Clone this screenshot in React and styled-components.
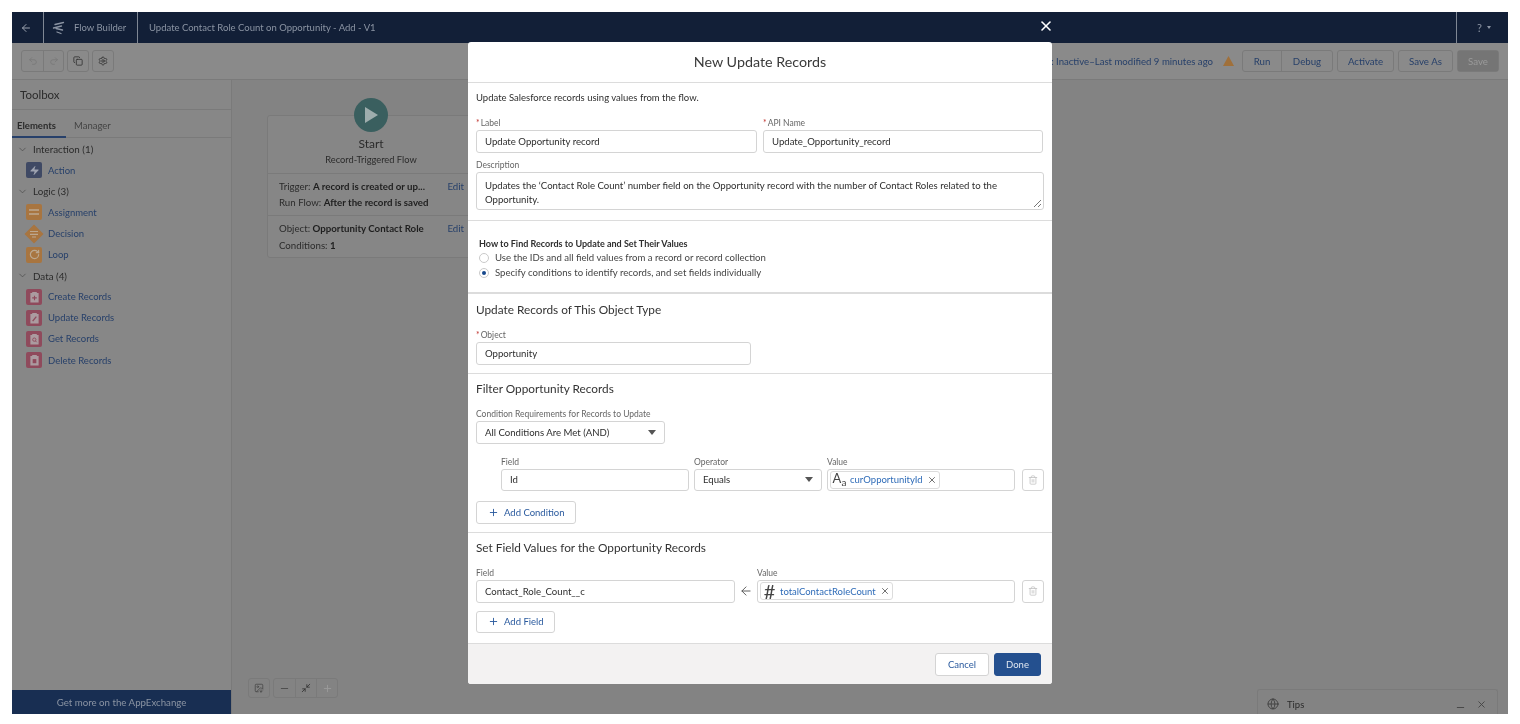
import React from 'react'
import styled, { createGlobalStyle } from 'styled-components'
import { ArrowLeft, Undo2, Redo2, Copy, Settings, ChevronDown, Plus, Minus, X, Trash2, Minimize2, Globe, Zap, RotateCw, ImageDown } from 'lucide-react'

const GlobalStyle = createGlobalStyle`
  html, body { margin: 0; padding: 0; background: #fff; }
  body { font-family: Lato, "Open Sans", sans-serif; overflow: hidden; }
  * { box-sizing: border-box; }
`

const dimText = '#2b2b2b'
const dimLink = '#27406a'
const dimLine = '#7a7a7a'
const dimOrange = '#a87540'
const dimRed = '#8f4a5c'

const Page = styled.div`
  width: 1520px;
  height: 724px;
  padding: 12px 12px 10px;
  position: relative;
`

const Shell = styled.div`
  height: 702px;
  display: flex;
  flex-direction: column;
  background: #868686;
  filter: blur(0.4px);
`

const TopBar = styled.header`
  height: 31px;
  flex: none;
  display: flex;
  align-items: stretch;
  background: #121f37;
  color: #8b94a3;
  font-size: 9.5px;
`

const TopCell = styled.div`
  display: flex;
  align-items: center;
  gap: ${p => p.$gap || '8px'};
  width: ${p => p.$w || 'auto'};
  padding: ${p => p.$pad || 0};
  border-right: ${p => p.$noLine ? 'none' : '1px solid #7f8794'};
  border-left: ${p => p.$lineLeft ? '1px solid #7f8794' : 'none'};
  flex: ${p => p.$grow ? 1 : 'none'};
`

const HelpMark = styled.span`
  font-size: 11px;
`

const MiniCaret = styled.span`
  width: 0;
  height: 0;
  border-left: 2.5px solid transparent;
  border-right: 2.5px solid transparent;
  border-top: 3px solid #8b94a3;
`

const ToolBar = styled.div`
  height: 37px;
  flex: none;
  display: flex;
  align-items: center;
  justify-content: space-between;
  padding: 0 9px;
  background: #8a8a8a;
  border-bottom: 1px solid ${dimLine};
`

const ToolGroup = styled.div`
  display: flex;
  align-items: center;
  gap: ${p => p.$gap};
`

const BtnGroup = styled.div`
  display: flex;
  height: ${p => p.$h || '22px'};
  border: 1px solid ${dimLine};
  border-radius: 3px;
`

const ToolBtn = styled.div`
  width: ${p => p.$w || '21px'};
  display: flex;
  align-items: center;
  justify-content: center;
  font-size: 9.7px;
  color: ${p => p.$faint ? '#9a9a9a' : dimLink};
  background: ${p => p.$solid ? '#757575' : 'transparent'};
  & + & { border-left: 1px solid ${dimLine}; }
`

const Status = styled.span`
  font-size: 9.6px;
  color: ${dimLink};
  white-space: nowrap;
  margin-right: 6px;
`

const WarnIcon = styled.svg`
  margin-right: 4px;
`

const Body = styled.div`
  flex: 1;
  min-height: 0;
  display: flex;
`

const Sidebar = styled.aside`
  width: 220px;
  flex: none;
  display: flex;
  flex-direction: column;
  border-right: 1px solid ${dimLine};
  background: #878787;
  color: ${dimText};
`

const SideTitle = styled.div`
  height: 30px;
  flex: none;
  padding: 8px 8px 0;
  font-size: 11.5px;
  border-bottom: 1px solid ${dimLine};
`

const Tabs = styled.div`
  height: 28px;
  flex: none;
  display: flex;
  border-bottom: 1px solid ${dimLine};
  font-size: 9.5px;
`

const Tab = styled.div`
  width: ${p => p.$w};
  padding: 10px 0 0 ${p => p.$left};
  font-weight: ${p => p.$active ? 700 : 400};
  border-bottom: ${p => p.$active ? `2px solid ${dimLink}` : 'none'};
  margin-bottom: -1px;
  color: ${p => p.$active ? dimText : '#444'};
`

const Tree = styled.div`
  flex: 1;
  padding-top: 0.6px;
`

const Group = styled.div`
  height: 21.1px;
  display: flex;
  align-items: center;
  gap: 5px;
  padding-left: 5px;
  font-size: 9.8px;
`

const Item = styled.div`
  height: 21.1px;
  display: flex;
  align-items: center;
  gap: 6px;
  padding-left: 14px;
  font-size: 9.5px;
  color: ${dimLink};
`

const ElemIcon = styled.span`
  width: 16px;
  height: 16px;
  flex: none;
  border-radius: 2px;
  background: ${p => p.$color};
  display: flex;
  align-items: center;
  justify-content: center;
  color: ${p => p.$ink || '#9da2b0'};
`

const DecisionIcon = styled.svg`
  flex: none;
  margin: 0 -2px;
`

const AppExchange = styled.div`
  height: 24px;
  flex: none;
  display: flex;
  align-items: center;
  justify-content: center;
  background: #182e52;
  color: #8b94a3;
  font-size: 9.7px;
`

const Canvas = styled.main`
  flex: 1;
  position: relative;
  background: #838383;
`

const StartCard = styled.div`
  position: absolute;
  left: 35px;
  top: 35px;
  width: 208px;
  color: ${dimText};
  border: 1px solid ${dimLine};
  border-radius: 3px;
  background: #868686;
  font-size: 9.7px;
`

const StartCircle = styled.div`
  position: absolute;
  left: 86px;
  top: -18px;
  width: 34px;
  height: 34px;
  border-radius: 50%;
  background: #3a5f5f;
  display: flex;
  align-items: center;
  justify-content: center;
`

const CardHead = styled.div`
  height: 57px;
  padding-top: 20px;
  text-align: center;
  font-size: 12px;
  line-height: 15px;
  small { display: block; font-size: 9.3px; line-height: 17px; }
`

const CardBlock = styled.div`
  height: ${p => p.$h};
  padding: 6px 11px 0;
  border-top: 1px solid ${dimLine};
  display: flex;
  flex-direction: column;
  gap: ${p => p.$gap};
`

const CardLine = styled.div`
  display: flex;
  justify-content: space-between;
  line-height: 12px;
  white-space: nowrap;
  b { font-weight: 700; color: #1e1e1e; }
  a { color: ${dimLink}; margin-right: -1px; }
`

const ZoomBar = styled.div`
  position: absolute;
  left: 16px;
  bottom: 16px;
  display: flex;
  gap: 3px;
  color: #5a5a5a;
`

const TipsPanel = styled.div`
  position: absolute;
  right: 10px;
  bottom: 0;
  width: 241px;
  height: 25px;
  display: flex;
  align-items: center;
  gap: 8px;
  padding: 4px 10px 0 9px;
  border: 1px solid ${dimLine};
  border-bottom: none;
  border-radius: 3px 3px 0 0;
  font-size: 9.5px;
  color: ${dimText};
`

const TipsActions = styled.div`
  margin-left: auto;
  display: flex;
  align-items: center;
  gap: 10px;
  color: #444;
`

const LowMinus = styled(Minus)`
  transform: translateY(3px);
`

const CloseBtn = styled.button`
  position: absolute;
  left: 1038px;
  top: 18px;
  width: 16px;
  height: 16px;
  padding: 0;
  border: 0;
  background: none;
  color: #fff;
  display: flex;
  align-items: center;
  justify-content: center;
`

const Modal = styled.div`
  position: absolute;
  left: 468px;
  top: 42px;
  width: 584px;
  height: 642px;
  background: #fff;
  border-radius: 3px;
  display: flex;
  flex-direction: column;
  color: #2e2e2e;
  overflow: hidden;
  filter: blur(0.25px);
`

const ModalTitle = styled.div`
  height: 41px;
  flex: none;
  padding-bottom: 2px;
  display: flex;
  align-items: center;
  justify-content: center;
  font-size: 14.3px;
  color: #3a3a3a;
  border-bottom: 1px solid #dcdcdc;
`

const Section = styled.section`
  height: ${p => p.$h};
  flex: none;
  padding: ${p => p.$pad || '8px 8px 0'};
  border-bottom: ${p => p.$thick ? '2px' : '1px'} solid #dcdcdc;
`

const Intro = styled.p`
  margin: 0 0 14px;
  font-size: 9.5px;
  line-height: 13px;
`

const TwoCols = styled.div`
  display: grid;
  grid-template-columns: 281px 280px;
  gap: 6px;
`

const Label = styled.div`
  height: 11px;
  font-size: 8.5px;
  line-height: 11px;
  color: #666;
  margin-bottom: 1px;
  white-space: nowrap;
  i { color: #c23934; font-style: normal; margin-right: 1px; }
`

const DescLabel = styled(Label)`
  margin-top: 7.5px;
`

const Box = styled.div`
  width: ${p => p.$w || '100%'};
  height: 22.5px;
  padding: 0 8px;
  border: 1px solid #d4d4d4;
  border-radius: 3px;
  display: flex;
  align-items: center;
  justify-content: space-between;
  font-size: 9.6px;
  white-space: nowrap;
`

const DescBox = styled.div`
  height: 38px;
  padding: 6px 8px 0;
  border: 1px solid #d4d4d4;
  border-radius: 3px;
  font-size: 9.6px;
  line-height: 14px;
  position: relative;
`

const Grip = styled.svg`
  position: absolute;
  right: 1px;
  bottom: 1px;
`

const SmallHead = styled.div`
  font-size: 9px;
  font-weight: 700;
  line-height: 12px;
`

const RadioRow = styled.label`
  height: 15px;
  display: flex;
  align-items: center;
  gap: 6px;
  font-size: 9.6px;
  color: #444;
`

const RadioDot = styled.span`
  width: 10px;
  height: 10px;
  border-radius: 50%;
  border: 1px solid #c9c9c9;
  display: flex;
  align-items: center;
  justify-content: center;
  &::after {
    content: '';
    width: 4px;
    height: 4px;
    border-radius: 50%;
    background: ${p => p.$on ? '#16478c' : 'transparent'};
  }
`

const SectionTitle = styled.h3`
  margin: 0 0 12px;
  font-size: 11.8px;
  font-weight: 400;
  line-height: 16px;
  color: #333;
`

const Caret = styled.span`
  width: 0;
  height: 0;
  border-left: 4px solid transparent;
  border-right: 4px solid transparent;
  border-top: 5px solid #555;
`

const Row = styled.div`
  display: flex;
  align-items: flex-end;
  gap: ${p => p.$gap || '5px'};
  margin: ${p => p.$m || 0};
`

const Col = styled.div`
  width: ${p => p.$w};
  flex: none;
`

const Pill = styled.span`
  display: inline-flex;
  align-items: center;
  height: 18px;
  padding: 0 2px 0 1px;
  border: 1px solid #dcdcdc;
  border-radius: 3px;
  color: #2f6cb8;
  font-size: 9.5px;
  svg { color: #555; margin-left: 4px; }
`

const TypeGlyph = styled.span`
  color: #444;
  width: 15px;
  font-size: ${p => p.$size};
  font-weight: 400;
  line-height: 1;
  text-align: center;
  margin-right: 3px;
  sub { font-size: 10px; vertical-align: -3px; }
`

const ValueBox = styled(Box)`
  justify-content: flex-start;
  padding: 0 2px;
`

const IconBtn = styled.div`
  width: 22px;
  height: 22.5px;
  flex: none;
  margin-left: 2px;
  border: 1px solid #d4d4d4;
  border-radius: 3px;
  color: #c4c4c4;
  display: flex;
  align-items: center;
  justify-content: center;
`

const AddBtn = styled.div`
  width: ${p => p.$w};
  height: 22.5px;
  margin: ${p => p.$m};
  padding-left: 11px;
  border: 1px solid #d4d4d4;
  border-radius: 3px;
  display: flex;
  align-items: center;
  gap: 5px;
  font-size: 9.5px;
  color: #2a5a9e;
`

const ArrowCell = styled.div`
  width: 22px;
  height: 22.5px;
  flex: none;
  display: flex;
  align-items: center;
  justify-content: center;
  color: #555;
`

const ModalFoot = styled.footer`
  flex: 1;
  display: flex;
  align-items: center;
  justify-content: flex-end;
  gap: 5px;
  padding: 0 11px 0 0;
  background: #f3f2f2;
`

const FootBtn = styled.div`
  width: ${p => p.$w};
  height: 23px;
  border-radius: 3px;
  display: flex;
  align-items: center;
  justify-content: center;
  font-size: 9.5px;
  background: ${p => p.$primary ? '#24508f' : '#fff'};
  color: ${p => p.$primary ? '#dfe6f0' : '#2a5a9e'};
  border: 1px solid ${p => p.$primary ? '#24508f' : '#d4d4d4'};
`

function FlowLogo() {
  return (
    <svg width="14" height="14" viewBox="0 0 14 14" fill="none" stroke="#8b94a3" strokeWidth="1.3" strokeLinecap="round">
      <path d="M3 3.5 11.5 1.5" />
      <path d="M1.5 7 9.5 5" />
      <path d="M4 7.5 10.5 9" />
      <path d="M5 11 9 12.5" />
    </svg>
  )
}

function Clip({ mark }) {
  return (
    <ElemIcon $color={dimRed}>
      <svg width="11" height="12" viewBox="0 0 12 13">
        <path fill="#ab9ba0" d="M1.5 2h2V1h5v1h2v10.5h-9z" />
        {mark === 'plus' && <path stroke={dimRed} strokeWidth="1.2" d="M6 5v5M3.5 7.5h5" />}
        {mark === 'pen' && <path stroke={dimRed} strokeWidth="1.4" d="M4 10l4-5" />}
        {mark === 'search' && <g fill="none" stroke={dimRed}><circle cx="5.8" cy="7.2" r="1.8" /><path d="M7 8.6l1.4 1.4" /></g>}
        {mark === 'trash' && <path fill={dimRed} d="M4 5.5h4V10H4z" />}
      </svg>
    </ElemIcon>
  )
}

function Decision() {
  return (
    <DecisionIcon width="20" height="20" viewBox="0 0 20 20">
      <path fill={dimOrange} d="M10 0.5 19.5 10 10 19.5.5 10z" />
      <path stroke="#bca890" strokeWidth="1.2" d="M6 7.5h8M6 10.3h8M8 13h4" />
    </DecisionIcon>
  )
}

function Lines() {
  return (
    <svg width="12" height="10" viewBox="0 0 12 10">
      <path stroke="#bca890" strokeWidth="1.5" d="M1 3h10M1 7h10" />
    </svg>
  )
}

function GroupHead({ children }) {
  return (
    <Group>
      <ChevronDown size={11} color="#444" strokeWidth={1.4} />
      {children}
    </Group>
  )
}

function App() {
  return (
    <Page>
      <GlobalStyle />
      <Shell>
        <TopBar>
          <TopCell $w="32px" $pad="0 0 0 8px"><ArrowLeft size={12} color="#9aa2af" /></TopCell>
          <TopCell $w="94px" $pad="0 0 0 8px"><FlowLogo /><span>Flow Builder</span></TopCell>
          <TopCell $grow $noLine $pad="0 0 0 11px">Update Contact Role Count on Opportunity - Add - V1</TopCell>
          <TopCell $w="52px" $noLine $lineLeft $gap="5px" $pad="0 0 0 20px"><HelpMark>?</HelpMark><MiniCaret /></TopCell>
        </TopBar>
        <ToolBar>
          <ToolGroup $gap="3px">
            <BtnGroup>
              <ToolBtn $faint><Undo2 size={10} color="#787878" /></ToolBtn>
              <ToolBtn $faint $w="20px"><Redo2 size={10} color="#787878" /></ToolBtn>
            </BtnGroup>
            <BtnGroup><ToolBtn $w="20px"><Copy size={10} color="#333" /></ToolBtn></BtnGroup>
            <BtnGroup><ToolBtn $w="20px"><Settings size={10} color="#333" /></ToolBtn></BtnGroup>
          </ToolGroup>
          <ToolGroup $gap="4px">
            <Status>Status: Inactive–Last modified 9 minutes ago</Status>
            <WarnIcon width="11" height="10" viewBox="0 0 11 10">
              <path fill="#a0703a" d="M5.5 0 11 10H0z" />
            </WarnIcon>
            <BtnGroup>
              <ToolBtn $w="38px">Run</ToolBtn>
              <ToolBtn $w="51px">Debug</ToolBtn>
            </BtnGroup>
            <BtnGroup><ToolBtn $w="55px">Activate</ToolBtn></BtnGroup>
            <BtnGroup><ToolBtn $w="53px">Save As</ToolBtn></BtnGroup>
            <BtnGroup><ToolBtn $w="40px" $solid $faint>Save</ToolBtn></BtnGroup>
          </ToolGroup>
        </ToolBar>
        <Body>
          <Sidebar>
            <SideTitle>Toolbox</SideTitle>
            <Tabs>
              <Tab $active $w="54px" $left="5px">Elements</Tab>
              <Tab $w="80px" $left="8px">Manager</Tab>
            </Tabs>
            <Tree>
              <GroupHead>Interaction (1)</GroupHead>
              <Item>
                <ElemIcon $color="#3f4964"><Zap size={11} fill="currentColor" strokeWidth={0} /></ElemIcon>
                Action
              </Item>
              <GroupHead>Logic (3)</GroupHead>
              <Item><ElemIcon $color={dimOrange}><Lines /></ElemIcon>Assignment</Item>
              <Item><Decision />Decision</Item>
              <Item><ElemIcon $color={dimOrange} $ink="#bca890"><RotateCw size={11} strokeWidth={2.6} /></ElemIcon>Loop</Item>
              <GroupHead>Data (4)</GroupHead>
              <Item><Clip mark="plus" />Create Records</Item>
              <Item><Clip mark="pen" />Update Records</Item>
              <Item><Clip mark="search" />Get Records</Item>
              <Item><Clip mark="trash" />Delete Records</Item>
            </Tree>
            <AppExchange>Get more on the AppExchange</AppExchange>
          </Sidebar>
          <Canvas>
            <StartCard>
              <StartCircle>
                <svg width="14" height="16" viewBox="0 0 14 16"><path fill="#9eadad" d="M1 0 14 8 1 16z" /></svg>
              </StartCircle>
              <CardHead>Start<small>Record-Triggered Flow</small></CardHead>
              <CardBlock $h="42px" $gap="4px">
                <CardLine><span>Trigger: <b>A record is created or up...</b></span><a>Edit</a></CardLine>
                <CardLine><span>Run Flow: <b>After the record is saved</b></span></CardLine>
              </CardBlock>
              <CardBlock $h="42px" $gap="5px">
                <CardLine><span>Object: <b>Opportunity Contact Role</b></span><a>Edit</a></CardLine>
                <CardLine><span>Conditions: <b>1</b></span></CardLine>
              </CardBlock>
            </StartCard>
            <ZoomBar>
              <BtnGroup $h="20px"><ToolBtn $w="20px"><ImageDown size={10} color="#4a4a4a" /></ToolBtn></BtnGroup>
              <BtnGroup $h="20px">
                <ToolBtn $w="21px"><Minus size={11} color="#4a4a4a" /></ToolBtn>
                <ToolBtn $w="21px"><Minimize2 size={10} color="#333" /></ToolBtn>
                <ToolBtn $w="21px"><Plus size={11} color="#9a9a9a" /></ToolBtn>
              </BtnGroup>
            </ZoomBar>
            <TipsPanel>
              <Globe size={12} color="#444" />
              Tips
              <TipsActions>
                <LowMinus size={11} />
                <X size={11} />
              </TipsActions>
            </TipsPanel>
          </Canvas>
        </Body>
      </Shell>

      <CloseBtn><X size={16} strokeWidth={2.4} /></CloseBtn>

      <Modal>
        <ModalTitle>New Update Records</ModalTitle>
        <Section $h="138px">
          <Intro>Update Salesforce records using values from the flow.</Intro>
          <TwoCols>
            <div>
              <Label><i>*</i>Label</Label>
              <Box>Update Opportunity record</Box>
            </div>
            <div>
              <Label><i>*</i>API Name</Label>
              <Box>Update_Opportunity_record</Box>
            </div>
          </TwoCols>
          <DescLabel>Description</DescLabel>
          <DescBox>
            Updates the ‘Contact Role Count’ number field on the Opportunity record with the number of Contact Roles related to the Opportunity.
            <Grip width="9" height="9" viewBox="0 0 9 9"><path stroke="#777" d="M1 8 8 1M5 8l3-3" /></Grip>
          </DescBox>
        </Section>
        <Section $h="73px" $thick $pad="17px 11px 0">
          <SmallHead>How to Find Records to Update and Set Their Values</SmallHead>
          <RadioRow><RadioDot />Use the IDs and all field values from a record or record collection</RadioRow>
          <RadioRow><RadioDot $on />Specify conditions to identify records, and set fields individually</RadioRow>
        </Section>
        <Section $h="80px">
          <SectionTitle>Update Records of This Object Type</SectionTitle>
          <Label><i>*</i>Object</Label>
          <Box $w="275px">Opportunity</Box>
        </Section>
        <Section $h="159px" $pad="7px 8px 0">
          <SectionTitle>Filter Opportunity Records</SectionTitle>
          <Label>Condition Requirements for Records to Update</Label>
          <Box $w="189px">All Conditions Are Met (AND)<Caret /></Box>
          <Row $m="13px 0 0 25px">
            <Col $w="188px"><Label>Field</Label><Box>Id</Box></Col>
            <Col $w="128px"><Label>Operator</Label><Box>Equals<Caret /></Box></Col>
            <Col $w="188px">
              <Label>Value</Label>
              <ValueBox>
                <Pill>
                  <TypeGlyph $size="13px">A<sub>a</sub></TypeGlyph>
                  curOpportunityId
                  <X size={10} />
                </Pill>
              </ValueBox>
            </Col>
            <IconBtn><Trash2 size={10} /></IconBtn>
          </Row>
          <AddBtn $w="100px" $m="10px 0 0"><Plus size={11} />Add Condition</AddBtn>
        </Section>
        <Section $h="111px" $pad="7px 8px 0">
          <SectionTitle>Set Field Values for the Opportunity Records</SectionTitle>
          <Row $gap="0">
            <Col $w="259px"><Label>Field</Label><Box>Contact_Role_Count__c</Box></Col>
            <ArrowCell><ArrowLeft size={14} strokeWidth={1.6} /></ArrowCell>
            <Col $w="258px">
              <Label>Value</Label>
              <ValueBox>
                <Pill>
                  <TypeGlyph $size="20px">#</TypeGlyph>
                  totalContactRoleCount
                  <X size={10} />
                </Pill>
              </ValueBox>
            </Col>
            <Col $w="5px" />
            <IconBtn><Trash2 size={10} /></IconBtn>
          </Row>
          <AddBtn $w="79px" $m="8px 0 0"><Plus size={11} />Add Field</AddBtn>
        </Section>
        <ModalFoot>
          <FootBtn $w="54px">Cancel</FootBtn>
          <FootBtn $w="47px" $primary>Done</FootBtn>
        </ModalFoot>
      </Modal>
    </Page>
  )
}

export default App
